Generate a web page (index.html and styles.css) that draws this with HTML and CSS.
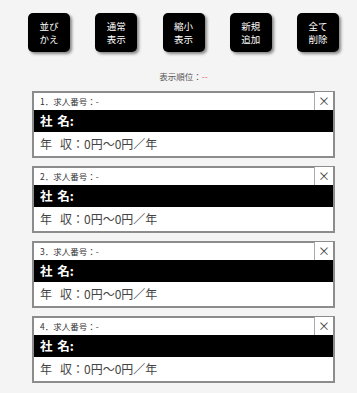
FILE: index.html
```html
<!DOCTYPE html>
<html lang="ja">
<head>
<meta charset="utf-8">
<link rel="stylesheet" href="styles.css">
</head>
<body>
<div class="page">
  <div class="toolbar">
    <button class="tool"><span>並び</span><span>かえ</span></button>
    <button class="tool"><span>通常</span><span>表示</span></button>
    <button class="tool"><span>縮小</span><span>表示</span></button>
    <button class="tool"><span>新規</span><span>追加</span></button>
    <button class="tool"><span>全て</span><span>削除</span></button>
  </div>
  <div class="order">表示順位：<span class="order-val">--</span></div>
  <div class="list">
    <div class="card">
      <div class="card-head"><span class="card-no">1．求人番号：-</span><span class="close">×</span></div>
      <div class="card-name">社&nbsp;名:</div>
      <div class="card-pay">年<span class="gap"></span>収：0円〜0円／年</div>
    </div>
    <div class="card">
      <div class="card-head"><span class="card-no">2．求人番号：-</span><span class="close">×</span></div>
      <div class="card-name">社&nbsp;名:</div>
      <div class="card-pay">年<span class="gap"></span>収：0円〜0円／年</div>
    </div>
    <div class="card">
      <div class="card-head"><span class="card-no">3．求人番号：-</span><span class="close">×</span></div>
      <div class="card-name">社&nbsp;名:</div>
      <div class="card-pay">年<span class="gap"></span>収：0円〜0円／年</div>
    </div>
    <div class="card">
      <div class="card-head"><span class="card-no">4．求人番号：-</span><span class="close">×</span></div>
      <div class="card-name">社&nbsp;名:</div>
      <div class="card-pay">年<span class="gap"></span>収：0円〜0円／年</div>
    </div>
  </div>
</div>
</body>
</html>
```

FILE: styles.css
```css
html, body {
  margin: 0;
  padding: 0;
  background: #f4f4f4;
  font-family: "Noto Sans CJK JP", "Noto Sans", sans-serif;
}
.page {
  width: 357px;
  height: 393px;
  overflow: hidden;
}
.toolbar {
  display: flex;
  justify-content: space-between;
  width: 311px;
  margin: 13px 0 0 28px;
}
.tool {
  width: 42px;
  height: 39px;
  padding: 0;
  border: none;
  border-radius: 5px;
  background: #000;
  color: #fff;
  font-family: inherit;
  font-size: 9.5px;
  line-height: 13px;
  box-shadow: 2px 2px 3px rgba(0, 0, 0, 0.45);
  display: flex;
  flex-direction: column;
  align-items: center;
  justify-content: center;
}
.order {
  margin: 18px 0 0 28px;
  width: 311px;
  text-align: center;
  font-size: 8.5px;
  line-height: 12px;
  color: #555;
}
.order-val {
  color: #f06060;
}
.list {
  display: flex;
  flex-direction: column;
  gap: 8px;
  width: 303px;
  margin: 9px 0 0 32px;
}
.card {
  box-sizing: border-box;
  height: 67px;
  border: 2px solid #8c8c8c;
  background: #fff;
  display: flex;
  flex-direction: column;
}
.card-head {
  display: flex;
  justify-content: space-between;
  align-items: stretch;
  height: 17px;
}
.card-no {
  padding-left: 6px;
  font-size: 8.5px;
  line-height: 17px;
  color: #333;
}
.close {
  box-sizing: border-box;
  width: 19px;
  height: 19px;
  margin-top: -1px;
  border-left: 1px solid #aaa;
  border-bottom: 1px solid #aaa;
  text-align: center;
  font-size: 12px;
  line-height: 17px;
  color: #444;
  background: #fff;
}
.card-name {
  height: 22px;
  background: #000;
  color: #fff;
  font-size: 12.5px;
  font-weight: bold;
  line-height: 22px;
  padding-left: 6px;
  word-spacing: 2px;
}
.card-pay {
  flex: 1;
  padding-left: 6px;
  font-size: 12px;
  line-height: 23px;
  color: #444;
}
.gap {
  display: inline-block;
  width: 8px;
}
```
